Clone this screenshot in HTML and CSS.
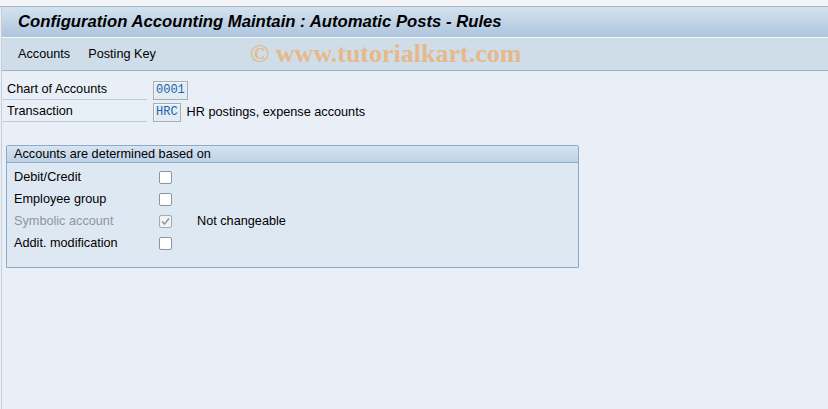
FILE: index.html
```html
<!DOCTYPE html>
<html lang="en">
<head>
  <meta charset="UTF-8" />
  <title>Configuration Accounting Maintain : Automatic Posts - Rules</title>
  <link rel="stylesheet" href="styles.css">
</head>
<body>
  <div class="top-strip"></div>
  <div class="frame">
    <div class="title-bar">
      <h1>Configuration Accounting Maintain : Automatic Posts - Rules</h1>
    </div>
    <div class="toolbar">
      <span class="menu-item">Accounts</span>
      <span class="menu-item">Posting Key</span>
      <span class="watermark">&copy; www.tutorialkart.com</span>
    </div>

    <div class="content">
      <div class="field-row">
        <label class="field-label">Chart of Accounts</label>
        <span class="field-value">0001</span>
      </div>
      <div class="field-row">
        <label class="field-label">Transaction</label>
        <span class="field-value">HRC</span>
        <span class="field-desc">HR postings, expense accounts</span>
      </div>

      <div class="group">
        <div class="group-head">Accounts are determined based on</div>
        <div class="group-body">
          <div class="check-row">
            <span class="check-label">Debit/Credit</span>
            <span class="checkbox"></span>
          </div>
          <div class="check-row">
            <span class="check-label">Employee group</span>
            <span class="checkbox"></span>
          </div>
          <div class="check-row disabled">
            <span class="check-label">Symbolic account</span>
            <span class="checkbox checked">
              <svg width="11" height="11" viewBox="0 0 11 11"><path d="M2 5.5 L4.5 8 L9 2.5" fill="none" stroke="#8a8f96" stroke-width="1.3"/></svg>
            </span>
            <span class="check-note">Not changeable</span>
          </div>
          <div class="check-row">
            <span class="check-label">Addit. modification</span>
            <span class="checkbox"></span>
          </div>
        </div>
      </div>
    </div>
  </div>
</body>
</html>
```

FILE: styles.css
```css
body { margin: 0; background: #e9eff7; font-family: "Liberation Sans", Arial, sans-serif; font-size: 12.7px; color: #000; height: 409px; overflow: hidden; }
.top-strip { height: 6px; background: #f2f4f8; border-bottom: 1px solid #a9b3c6; }
.frame { margin-left: 1px; border-left: 1px solid #c9cfd8; height: 402px; }
.title-bar { height: 30px; background: linear-gradient(#d4e2ef, #adc5dd); border-bottom: 1px solid #f4f7fb; display: flex; align-items: center; padding-left: 16px; }
.title-bar h1 { margin: 0; font-size: 16.7px; font-weight: bold; font-style: italic; color: #000; }
.toolbar { height: 32px; background: #cfdde8; border-bottom: 1px solid #a2b2c4; display: flex; align-items: center; padding-left: 16px; }
.menu-item { margin-right: 18px; }
.watermark { margin-left: 76px; font-family: "Liberation Serif", "Times New Roman", serif; font-weight: bold; font-size: 26px; color: #e6b98b; }
.content { padding: 8px 0 0 1px; }
.field-row { display: flex; align-items: center; height: 22px; }
.field-label { width: 140px; height: 19px; line-height: 19px; padding-left: 4px; border-bottom: 1px solid #c4ccd6; margin-right: 6px; }
.field-value { height: 17px; line-height: 17px; padding: 0 2px; border: 1px solid #a6aeb6; box-shadow: inset 1px 1px 0 #f4f7fa; background: #e3ebf3; font-family: "Liberation Mono", "Courier New", monospace; font-size: 12px; color: #1f63ae; }
.field-desc { margin-left: 6px; }
.group { margin: 22px 0 0 3px; width: 571px; border: 1px solid #8eaacb; border-radius: 2px 2px 0 0; background: #dde8f2; }
.group-head { height: 16px; line-height: 16px; padding-left: 7px; background: linear-gradient(#d7e4f1, #bdd1e7); border-bottom: 1px solid #8eaacb; }
.group-body { padding: 3px 0 13px 7px; }
.check-row { display: flex; align-items: center; height: 22px; }
.check-label { width: 145px; }
.checkbox { width: 11px; height: 11px; border: 1px solid #8c949c; border-radius: 2px; background: #fff; display: flex; align-items: center; justify-content: center; }
.checkbox.checked { background: #f0f2f4; border-color: #a4aab0; }
.disabled .check-label { color: #8f969e; }
.check-note { margin-left: 25px; }
```
